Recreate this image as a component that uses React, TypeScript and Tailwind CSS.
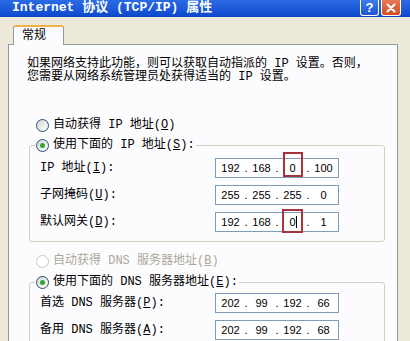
import { Fragment, type ReactNode } from 'react';

const simsun = "font-['Liberation_Mono','Noto_Sans_CJK_SC',monospace]";

function Radio({ checked, disabled }: { checked?: boolean; disabled?: boolean }) {
  return (
    <span
      className={`flex h-[13px] w-[13px] shrink-0 items-center justify-center rounded-full border ${
        disabled ? 'border-[#CAC8BB] bg-white' : 'border-[#1C5180] bg-linear-to-br from-[#D8D6CC] to-white'
      }`}
    >
      {checked && <span className="h-[5px] w-[5px] rounded-full bg-[#33A333]" />}
    </span>
  );
}

function Key({ k }: { k: string }) {
  return (
    <>
      (<u>{k}</u>)
    </>
  );
}

function IpBox({ parts, children }: { parts: string[]; children?: ReactNode }) {
  return (
    <div className="relative flex h-[20px] w-[124px] items-center border border-[#7F9DB9] bg-white pl-[2px] font-['Liberation_Sans',sans-serif] text-[11px] leading-none text-black">
      {parts.map((p, i) => (
        <Fragment key={i}>
          {i > 0 && <span className="w-[6px] text-center">.</span>}
          <span className="w-[25px] text-center">{p}</span>
        </Fragment>
      ))}
      {children}
    </div>
  );
}

function Row({ label, parts, children }: { label: ReactNode; parts: string[]; children?: ReactNode }) {
  return (
    <div className="flex h-[20px] items-center">
      <span className="w-[175px] whitespace-nowrap">{label}</span>
      <IpBox parts={parts}>{children}</IpBox>
    </div>
  );
}

function Legend({ children }: { children: ReactNode }) {
  return (
    <legend className="ml-[5px] px-[1px]">
      <div className="flex h-[14px] items-center gap-[4px] whitespace-nowrap">
        <Radio checked />
        <span>{children}</span>
      </div>
    </legend>
  );
}

export default function App() {
  return (
    <div className={`flex h-[341px] w-[410px] flex-col overflow-hidden bg-[#ECE9D8] text-[12px] leading-[12px] text-black ${simsun}`}>
      {/* title bar */}
      <div className="flex h-[17px] shrink-0 items-start bg-linear-to-b from-[#2C6BE6] to-[#0A48CC] pl-[12px] pr-[9px]">
        <span className="text-[13px] font-bold leading-[16px] text-white">Internet 协议 (TCP/IP) 属性</span>
        <div className="ml-auto flex gap-[2px]">
          <div className="flex h-[16px] w-[19px] items-center justify-center rounded-b-[3px] border border-t-0 border-white bg-linear-to-b from-[#3C7CF0] to-[#1E55D6] font-['Liberation_Sans',sans-serif] text-[13px] font-bold leading-none text-white">
            ?
          </div>
          <div className="flex h-[16px] w-[20px] items-center justify-center rounded-b-[3px] border border-t-0 border-white bg-linear-to-b from-[#E87A55] to-[#D14B20]">
            <svg width="10" height="10" viewBox="0 0 10 10">
              <path d="M1.5 1.5 L8.5 8.5 M8.5 1.5 L1.5 8.5" stroke="white" strokeWidth="2" strokeLinecap="round" />
            </svg>
          </div>
        </div>
      </div>

      {/* tab */}
      <div className="relative z-10 -mb-px ml-[13px] mt-[8px] flex h-[20px] w-[51px] shrink-0 items-center rounded-t-[3px] border border-b-0 border-[#919B9C] border-t-[#F0B14A] border-t-2 bg-[#FCFCFE] pl-[8px]">
        常规
      </div>

      {/* panel */}
      <div className="ml-[8px] w-[390px] flex-1 border border-[#919B9C] bg-[#FCFCFE]">
        <p className="pl-[18px] pt-[13px] leading-[13px] whitespace-nowrap">
          如果网络支持此功能，则可以获取自动指派的 IP 设置。否则，
          <br />
          您需要从网络系统管理员处获得适当的 IP 设置。
        </p>

        <div className="ml-[27px] mt-[34px] flex h-[14px] items-center gap-[4px]">
          <Radio />
          <span>
            自动获得 IP 地址<Key k="O" />
          </span>
        </div>

        <fieldset className="ml-[20px] mt-[6px] w-[356px] rounded-[3px] border border-[#D0D0BF] pb-[9px]">
          <Legend>
            使用下面的 IP 地址<Key k="S" />:
          </Legend>
          <div className="flex flex-col gap-[7px] pl-[10px] pt-[6px]">
            <Row label={<>IP 地址<Key k="I" />:</>} parts={['192', '168', '0', '100']}>
              <div className="absolute left-[67px] top-[-7px] h-[25px] w-[20px] border-2 border-[#A8343A]" />
            </Row>
            <Row label={<>子网掩码<Key k="U" />:</>} parts={['255', '255', '255', '0']} />
            <Row label={<>默认网关<Key k="D" />:</>} parts={['192', '168', '0', '1']}>
              <div className="absolute left-[66px] top-[-4px] h-[24px] w-[21px] border-2 border-[#A8343A]" />
              <div className="absolute left-[80px] top-[3px] h-[12px] w-px bg-black" />
            </Row>
          </div>
        </fieldset>

        <div className="ml-[27px] mt-[12px] flex h-[14px] items-center gap-[4px] text-[#ACA899]">
          <Radio disabled />
          <span>
            自动获得 DNS 服务器地址<Key k="B" />
          </span>
        </div>

        <fieldset className="ml-[20px] mt-[7px] w-[356px] rounded-[3px] border border-[#D0D0BF] pb-[9px]">
          <Legend>
            使用下面的 DNS 服务器地址<Key k="E" />:
          </Legend>
          <div className="flex flex-col gap-[7px] pl-[10px] pt-[4px]">
            <Row label={<>首选 DNS 服务器<Key k="P" />:</>} parts={['202', '99', '192', '66']} />
            <Row label={<>备用 DNS 服务器<Key k="A" />:</>} parts={['202', '99', '192', '68']} />
          </div>
        </fieldset>
      </div>
    </div>
  );
}
